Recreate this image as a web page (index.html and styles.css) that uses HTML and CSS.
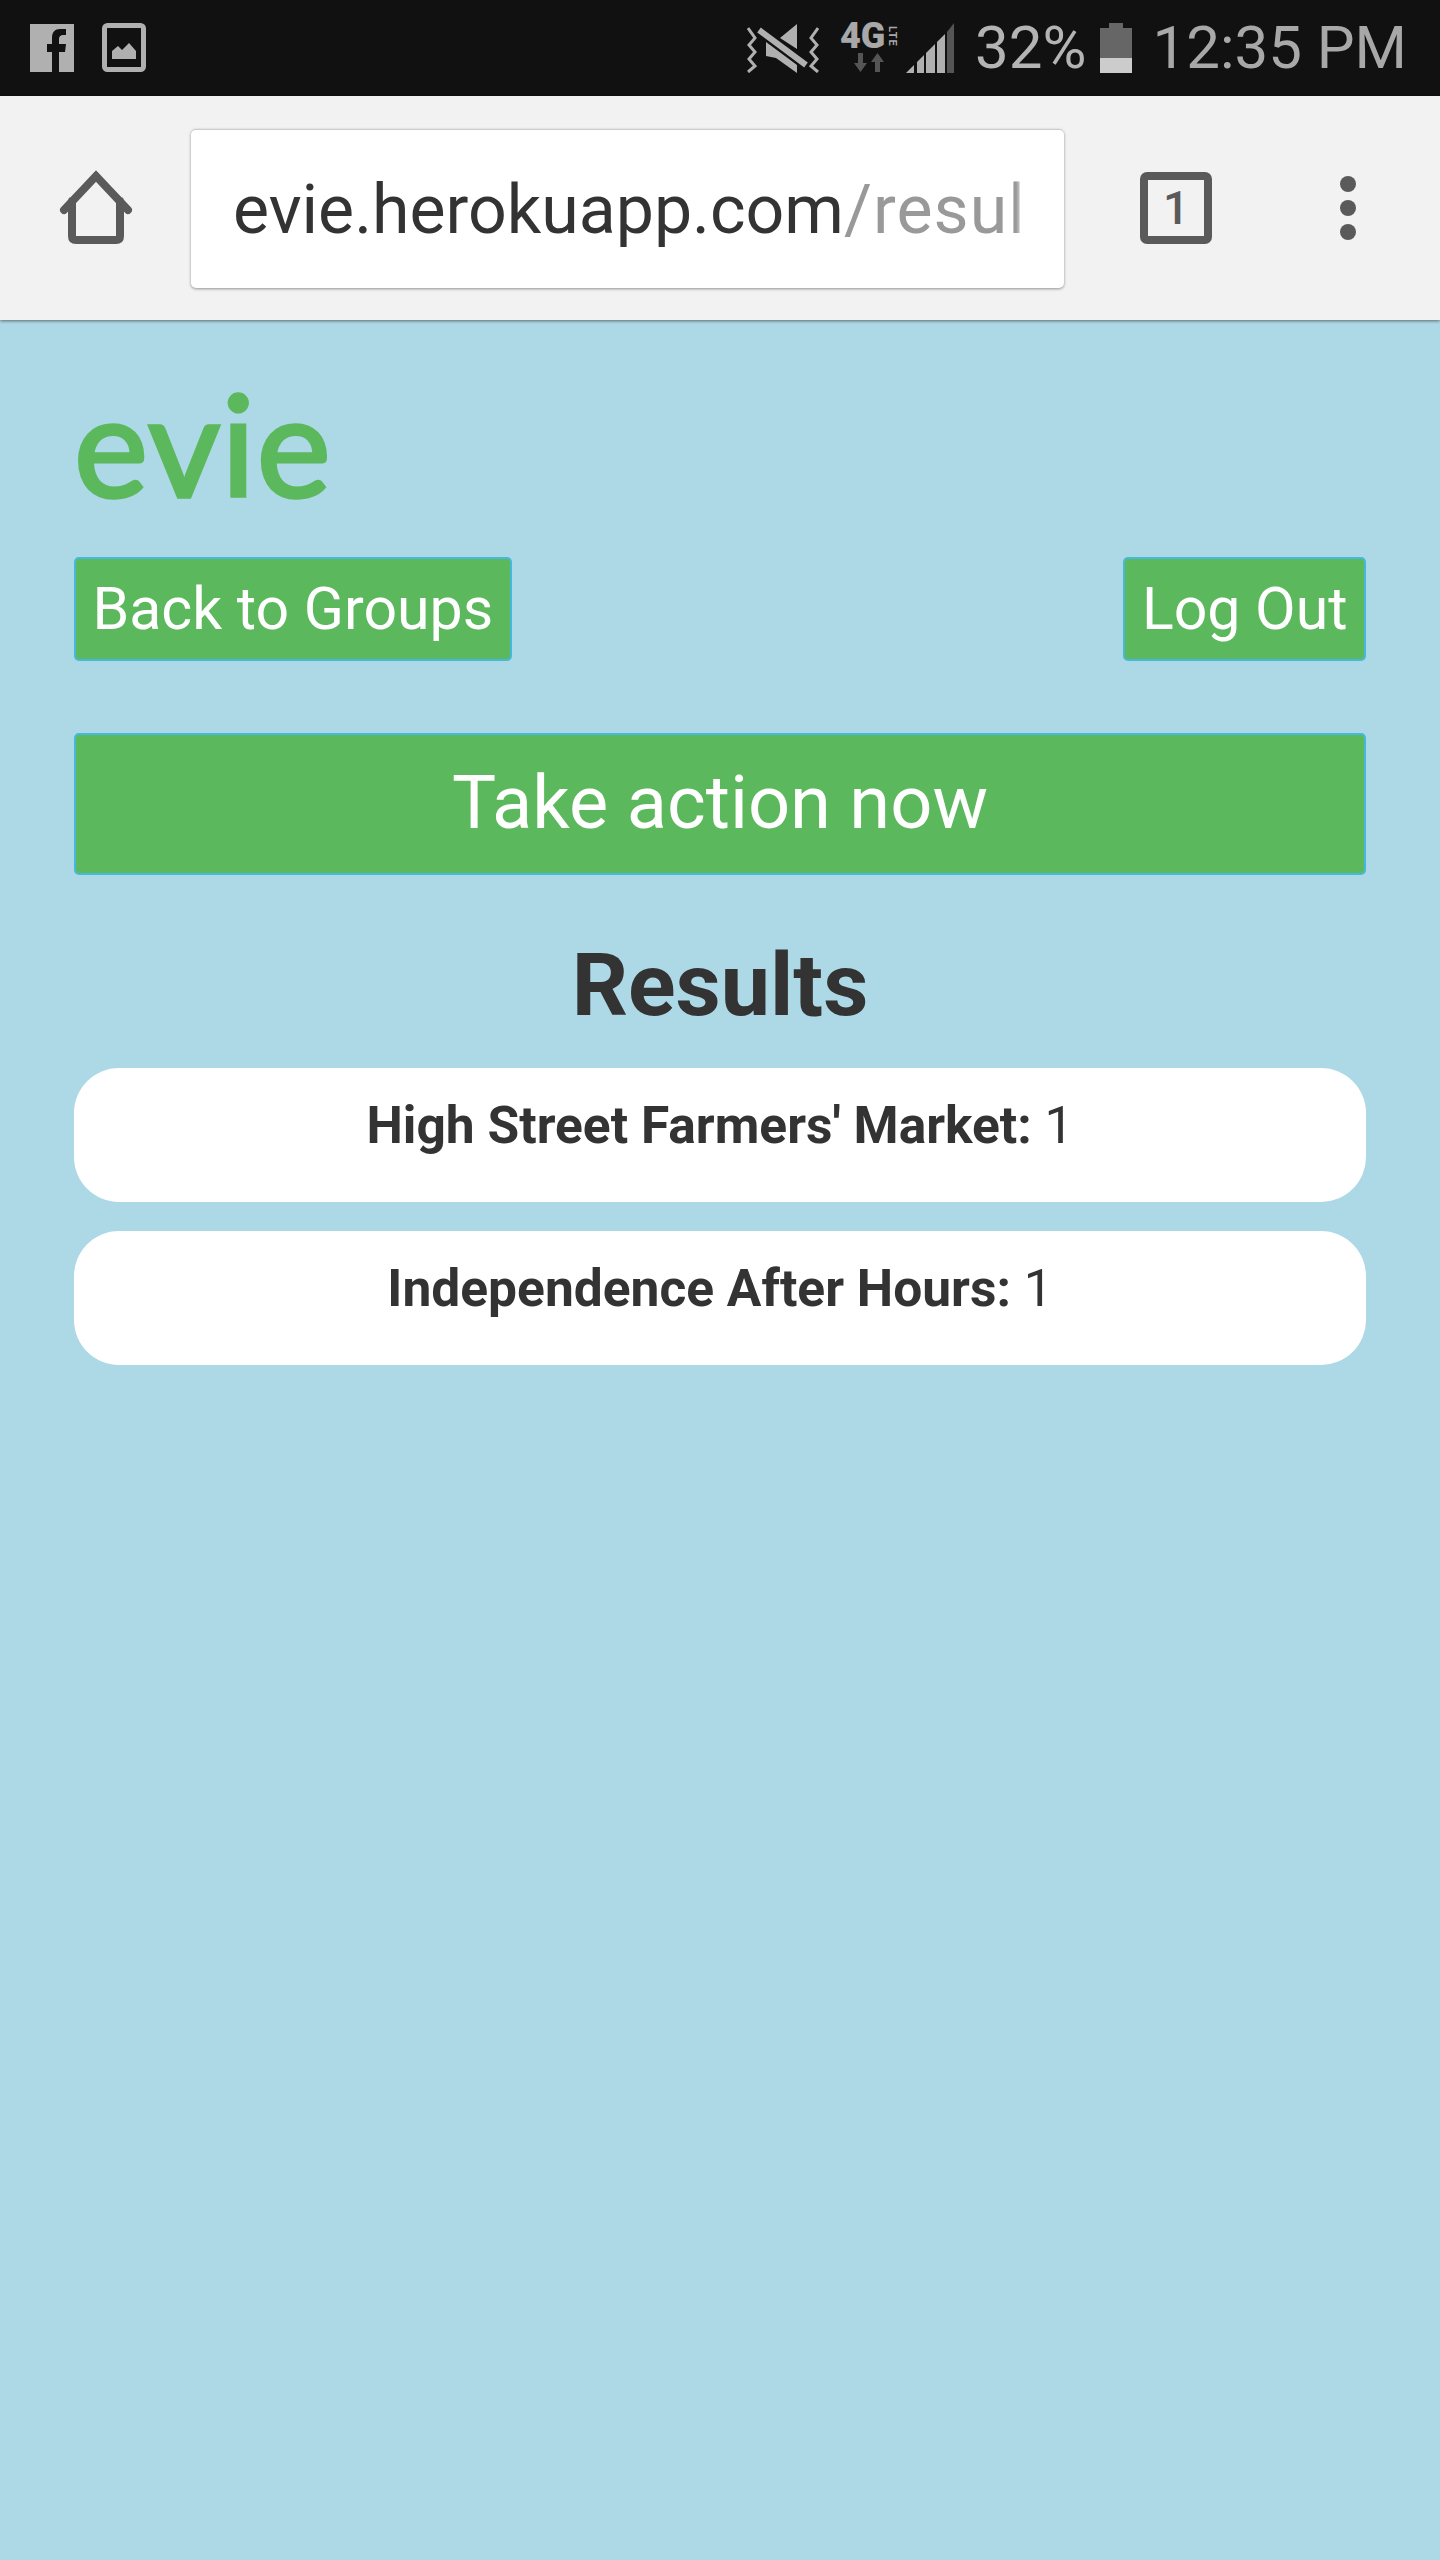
FILE: index.html
```html
<!DOCTYPE html>
<html lang="en">
  <head>
    <meta charset="UTF-8" />
    <meta name="viewport" content="width=device-width, initial-scale=1.0" />
    <title>evie</title>
    <link rel="stylesheet" href="styles.css">
  </head>
  <body>
    <div class="status-bar">
      <div class="status-left">
        <svg class="icon-fb" width="44" height="48" viewBox="0 0 44 48">
          <path d="M0 0H44V48H29V28H35L36 20H29V15C29 12 31 11 33 11H36V5H30C25 5 22 8 22 14V20H17V28H22V48H0Z" />
        </svg>
        <svg class="icon-pic" width="44" height="50" viewBox="0 0 44 50">
          <rect x="2.500" y="2.500" width="39" height="44" rx="3" />
          <path class="solid" d="M10 36V28L16 23L20 27L27 20L34 28V36Z" />
        </svg>
      </div>
      <div class="status-right">
        <svg class="icon-mute" width="72" height="50" viewBox="0 0 72 50">
          <path class="zig" d="M1 5L8 15L2 22L8 29L2 36L8 43L1 49" />
          <path class="zig" d="M71 5L64 15L70 22L64 29L70 36L64 43L71 49" />
          <path class="solid" d="M33 15L50 1V26ZM19 19V33L29 35L50 50V42Z" />
          <path class="zig thick" d="M12 7L59 42" />
        </svg>
        <div class="net">
          <div class="net-top">
            <span class="net-4g">4G</span>
            <span class="net-lte">LTE</span>
          </div>
          <svg width="30" height="19" viewBox="0 0 30 19">
            <path d="M4 0H9V10H13L6.500 19L0 10H4ZM21 19H26V9H30L23.500 0L17 9H21Z" />
          </svg>
        </div>
        <svg class="icon-signal" width="49" height="50" viewBox="0 0 49 50">
          <path d="M0 50L8 42V50ZM11 39L18 32V50H11ZM20 30L29 21V50H20ZM31 19L39 11V50H31Z" />
          <path class="dim" d="M41 9L48 0V50H41Z" />
        </svg>
        <span class="status-text batt-pct">32%</span>
        <svg class="icon-batt" width="32" height="50" viewBox="0 0 32 50">
          <path class="dim" d="M9 0H23V5H32V35H0V5H9Z" />
          <rect class="level" y="35" width="32" height="15" />
        </svg>
        <span class="status-text clock">12:35 PM</span>
      </div>
    </div>

    <div class="toolbar">
      <svg class="icon-home" width="76" height="76" viewBox="0 0 76 76">
        <path d="M6 40L38 6L70 40M14 31V66C14 69 15 70 18 70H58C61 70 62 69 62 66V31" />
      </svg>
      <div class="url-box">
        <div class="url-text"><span>evie.herokuapp.com</span><span class="url-path">/results</span></div>
      </div>
      <div class="tab-count">1</div>
      <div class="menu-dots"><i></i><i></i><i></i></div>
    </div>

    <div class="page">
      <h1 class="logo">evie</h1>
      <div class="nav-row">
        <a class="btn" href="#">Back to Groups</a>
        <a class="btn" href="#">Log Out</a>
      </div>
      <a class="btn btn-wide" href="#">Take action now</a>
      <h2 class="results-title">Results</h2>
      <div class="result"><b>High Street Farmers' Market:</b> 1</div>
      <div class="result"><b>Independence After Hours:</b> 1</div>
    </div>
  </body>
</html>
```

FILE: styles.css
```css
body {
  margin: 0;
  min-height: 2560px;
  background-color: #add8e6;
  font-family: Roboto, sans-serif;
  color: #333;
}

/* status bar */
.status-bar {
  height: 96px;
  background-color: #111;
  display: flex;
  align-items: center;
  justify-content: space-between;
  padding: 0 33px 0 30px;
}
.status-left,
.status-right {
  display: flex;
  align-items: center;
}
.status-left {
  gap: 28px;
}
.status-bar svg {
  display: block;
  fill: #b0b0b0;
}
.icon-pic rect {
  fill: none;
  stroke: #b0b0b0;
  stroke-width: 5;
}
.icon-mute .zig {
  fill: none;
  stroke: #b0b0b0;
  stroke-width: 3;
}
.icon-mute .thick {
  stroke-width: 6;
}
.net {
  margin-left: 20px;
  width: 60px;
  display: flex;
  flex-direction: column;
  align-items: center;
  gap: 4px;
}
.net svg {
  fill: #555;
}
.net-top {
  display: flex;
  align-items: center;
  height: 25px;
}
.net-4g {
  font-size: 36px;
  font-weight: 900;
  line-height: 25px;
  color: #a8a8a8;
}
.net-lte {
  writing-mode: vertical-rl;
  font-size: 11px;
  font-weight: 700;
  letter-spacing: 1px;
  line-height: 11px;
  margin-left: 2px;
  color: #a8a8a8;
}
.icon-signal {
  margin-left: 7px;
}
.status-bar .dim {
  fill: #555;
}
.status-text {
  font-size: 60px;
  line-height: 60px;
  color: #b4b4b4;
}
.batt-pct {
  margin-left: 20px;
}
.icon-batt {
  margin-left: 14px;
}
.icon-batt .dim {
  fill: #666;
}
.icon-batt .level {
  fill: #ccc;
}
.clock {
  margin-left: 20px;
  color: #a8a8a8;
}

/* browser toolbar */
.toolbar {
  height: 224px;
  box-sizing: border-box;
  background-color: #f2f2f2;
  box-shadow: 0 1px 3px rgba(0, 0, 0, 0.5);
  display: flex;
  align-items: center;
  padding-left: 58px;
}
.icon-home {
  display: block;
  flex: none;
}
.icon-home path {
  fill: none;
  stroke: #5a5a5a;
  stroke-width: 8;
  stroke-linecap: round;
}
.url-box {
  margin-left: 57px;
  width: 873px;
  height: 159px;
  box-sizing: border-box;
  padding: 3px 40px 0 42px;
  background-color: #fff;
  border-radius: 5px;
  border-top: 1px solid #ccc;
  box-shadow: 0 1px 3px rgba(0, 0, 0, 0.4);
}
.url-text {
  font-size: 68px;
  line-height: 155px;
  white-space: nowrap;
  overflow: hidden;
  -webkit-mask-image: linear-gradient(to right, #000 99%, transparent 100%);
}
.url-path {
  color: #999;
  letter-spacing: 1px;
}
.tab-count {
  margin-left: 76px;
  width: 72px;
  height: 72px;
  box-sizing: border-box;
  border: 8px solid #5a5a5a;
  border-radius: 7px;
  color: #5a5a5a;
  font-size: 46px;
  font-weight: 500;
  line-height: 56px;
  text-align: center;
}
.menu-dots {
  margin-left: 128px;
  display: flex;
  flex-direction: column;
  gap: 8px;
}
.menu-dots i {
  display: block;
  width: 16px;
  height: 16px;
  border-radius: 50%;
  background-color: #5a5a5a;
}

/* page */
.page {
  padding: 0 74px;
}
.logo {
  margin: 0;
  padding-top: 37px;
  font-family: Lato, sans-serif;
  font-size: 140px;
  font-weight: 400;
  letter-spacing: 1.500px;
  -webkit-text-stroke: 3.500px #5cb85c;
  line-height: 173px;
  color: #5cb85c;
}
.nav-row {
  margin-top: 27px;
  display: flex;
  justify-content: space-between;
}
.btn {
  display: block;
  box-sizing: border-box;
  height: 104px;
  padding: 0 16.500px;
  background-color: #5cb85c;
  border: 2px solid #46b8da;
  border-radius: 5px;
  color: #fff;
  font-size: 59px;
  line-height: 100px;
  text-decoration: none;
}
.btn-wide {
  margin-top: 72px;
  height: 142px;
  font-size: 74px;
  line-height: 136px;
  text-align: center;
}
.results-title {
  margin: 65px 0 0;
  font-size: 88px;
  font-weight: 700;
  line-height: 89px;
  text-align: center;
}
.result {
  margin-bottom: 29px;
  height: 134px;
  box-sizing: border-box;
  padding-top: 26px;
  background-color: #fff;
  border-radius: 45px;
  font-size: 51.500px;
  line-height: 64px;
  text-align: center;
}
.results-title + .result {
  margin-top: 39px;
}
```
